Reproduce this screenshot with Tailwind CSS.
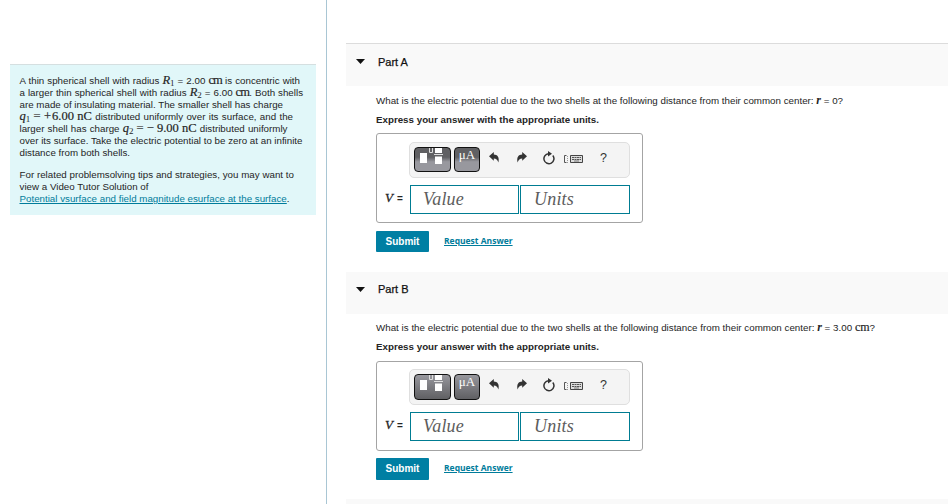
<!DOCTYPE html>
<html lang="en">
<head>
<meta charset="utf-8">
<title>Electric potential of two shells</title>
<script src="https://cdn.jsdelivr.net/npm/@tailwindcss/browser@4"></script>
</head>
<body class="bg-white text-[#252525] font-['Liberation_Sans',Arial,sans-serif] overflow-hidden">
<svg class="hidden">
  <symbol id="undo" viewBox="0 0 11 11"><path d="M0 4.300 4.800 0v2.500C8.300 2.600 10.600 4.900 9.400 10.500 8.500 7.800 7.200 6.500 4.800 6.400v2.400z" fill="#333"/></symbol>
  <symbol id="reset" viewBox="0 0 14 14"><path d="M6.500 2.700A5 5 0 1 0 10.800 4.500" fill="none" stroke="#333" stroke-width="1.500"/><path d="M6 0 10 2.800 6 5.400z" fill="#333"/></symbol>
  <symbol id="keys" viewBox="0 0 19 10"><path d="M2.500 1.500h-2v7h2" fill="none" stroke="#555"/><path d="M3.500 2v7" stroke="#999" stroke-dasharray="1 1"/><path d="M6.500 1.500h12v7h-12z" fill="#ddd" stroke="#444"/><path d="M8 3.500h9M8 5.500h9" stroke="#555" stroke-dasharray="2 .5"/><path d="M10 7h5" stroke="#777"/></symbol>
  <symbol id="templates" viewBox="0 0 35 23"><path d="M5 5h7v10H5zM20 0h7v5h-7zM20 8.500h7V16h-7z" fill="#fff"/><path d="M14.500 0v4.500h3V0M19 6.500h9" fill="none" stroke="#ddd"/></symbol>
</svg>
<div class="flex h-[504px] w-[948px]">
  <aside class="w-[327px] shrink-0 border-r border-[#a9c6d4] pt-[64px] pl-[10px]">
    <div class="h-[151px] w-[306px] border-t border-[#d5dfe0] bg-[#e1f7f9] pt-[10px] pl-[9.500px] text-[9.750px] leading-[12px] whitespace-nowrap [&_div]:h-[12px] [&_div]:[text-align-last:justify] [&_i]:font-['Liberation_Serif',serif] [&_i]:text-[12.500px] [&_i]:leading-[0px] [&_i]:[-webkit-text-stroke:.2px_#252525] [&_b]:font-['Liberation_Serif',serif] [&_b]:font-normal [&_b]:text-[12.500px] [&_b]:leading-[0px] [&_b]:[-webkit-text-stroke:.2px_#252525] [&_sub]:text-[9px] [&_sub]:leading-[0px] [&_sub]:font-['Liberation_Serif',serif] [&_sub]:bottom-[-2px]">
      <div class="w-[280.500px]">A thin spherical shell with radius <i>R</i><sub>1</sub> = 2.00 <b class="tracking-[-.8px]">cm</b> is concentric with</div>
      <div class="w-[283.500px]">a larger thin spherical shell with radius <i>R</i><sub>2</sub> = 6.00 <b class="tracking-[-.8px]">cm</b>. Both shells</div>
      <div class="w-[263.500px]">are made of insulating material. The smaller shell has charge</div>
      <div class="w-[273.500px]"><i>q</i><sub>1</sub> <b class="text-[#777]">=</b> <b>+&hairsp;6.00</b> <b>nC</b> distributed uniformly over its surface, and the</div>
      <div class="w-[268px]">larger shell has charge <i>q</i><sub>2</sub> <b class="text-[#777]">=</b> <b>−</b> <b>9.00</b> <b>nC</b> distributed uniformly</div>
      <div class="w-[283px]">over its surface. Take the electric potential to be zero at an infinite</div>
      <div class="w-[110px]">distance from both shells.</div>
      <div class="mt-[10px] w-[274.500px]">For related problemsolving tips and strategies, you may want to</div>
      <div class="w-[129px]">view a Video Tutor Solution of</div>
      <div class="w-[270px]"><a class="text-[#007c9b] underline">Potential vsurface and field magnitude esurface at the surface</a>.</div>
    </div>
  </aside>
  <main class="flex-1 pl-[19px] pt-[43px]">
    <section class="h-[229px]">
      <header class="flex h-[43px] items-center border-t border-[#dcdcdc] bg-[#f9f9f9] pl-[11px] pb-[7px]">
        <svg class="-ml-px h-[5px] w-[9px]" viewBox="0 0 8 5" preserveAspectRatio="none"><path d="M0 0h8L4 5z" fill="#111"/></svg>
        <h2 class="ml-[13px] text-[11px] leading-[14px] font-normal text-[#111] [-webkit-text-stroke:.25px_#111]">Part A</h2>
      </header>
      <div class="pl-[30px] pt-[8px] whitespace-nowrap">
        <p class="h-[14px] w-[467px] text-[9.750px] leading-[14px] [text-align-last:justify]">What is the electric potential due to the two shells at the following distance from their common center: <i class="font-['Liberation_Serif',serif] text-[12px] leading-[0px] font-bold">r</i> = 0?</p>
        <p class="mt-[5px] h-[14px] w-[223px] text-[9.750px] leading-[14px] font-bold [text-align-last:justify]">Express your answer with the appropriate units.</p>
        <div class="mt-[6px] h-[90px] w-[267px] rounded-[3px] border border-[#a4a4a4] pt-[8px] pl-[8px]">
          <div class="ml-[24px] flex h-[36px] w-[221px] items-start rounded-[5px] border border-[#dfdfdf] bg-[#f4f4f4] pl-[4px] pt-[4px]">
            <div class="h-[25px] w-[37px] rounded-[4px] border border-[#111] bg-linear-to-b from-[#606063] from-40% to-[#98989e] to-60%"><svg class="h-[23px] w-[35px]"><use href="#templates"/></svg></div>
            <div class="ml-[3px] h-[25px] w-[26px] rounded-[4px] border border-[#111] bg-linear-to-b from-[#606063] from-40% to-[#98989e] to-60% text-center font-['Liberation_Serif',serif] text-[13px] leading-[14px] text-white">μA</div>
            <svg class="mt-[5px] ml-[9px] h-[11px] w-[11px]"><use href="#undo"/></svg>
            <svg class="mt-[5px] ml-[16px] h-[11px] w-[11px] -scale-x-100"><use href="#undo"/></svg>
            <svg class="mt-[4px] ml-[15px] h-[14px] w-[14px]"><use href="#reset"/></svg>
            <svg class="mt-[7px] ml-[8px] h-[10px] w-[19px]"><use href="#keys"/></svg>
            <span class="mt-[4px] ml-[17px] text-[12.500px] leading-[14px] text-[#333]">?</span>
          </div>
          <div class="mt-[7px] flex h-[29px]">
            <div class="flex w-[25px] gap-[4px] text-[10px] leading-[26px]"><i class="font-['Liberation_Serif',serif] text-[13px] [-webkit-text-stroke:.3px_#252525]">V</i><span class="font-bold pt-px">=</span></div>
            <div class="w-[109px] border border-[#007c92] pl-[12px] font-['Liberation_Serif',serif] text-[18px] leading-[27px] text-[#5c5c5c] italic tracking-[.2px]">Value</div>
            <div class="ml-px w-[110px] border border-[#007c92] pl-[13px] font-['Liberation_Serif',serif] text-[18px] leading-[27px] text-[#5c5c5c] italic tracking-[.2px]">Units</div>
          </div>
        </div>
        <div class="mt-[8px] flex items-start">
          <button class="h-[21px] w-[53px] rounded-[1px] bg-[#007fa3] text-[10px] leading-[20px] font-bold text-white">Submit</button>
          <a class="mt-[3px] ml-[15px] w-[68px] [text-align-last:justify] font-['Open_Sans',sans-serif] text-[8.500px] leading-[14px] font-bold text-[#007c9b] underline">Request Answer</a>
        </div>
      </div>
    </section>
    <section class="h-[227px]">
      <header class="flex h-[42px] items-center bg-[#f9f9f9] pl-[11px] pb-[8px]">
        <svg class="-ml-px h-[5px] w-[9px]" viewBox="0 0 8 5" preserveAspectRatio="none"><path d="M0 0h8L4 5z" fill="#111"/></svg>
        <h2 class="ml-[13px] text-[11px] leading-[14px] font-normal text-[#111] [-webkit-text-stroke:.25px_#111]">Part B</h2>
      </header>
      <div class="pl-[30px] pt-[7px] whitespace-nowrap">
        <p class="h-[14px] w-[499px] text-[9.750px] leading-[14px] [text-align-last:justify]">What is the electric potential due to the two shells at the following distance from their common center: <i class="font-['Liberation_Serif',serif] text-[12px] leading-[0px] font-bold">r</i> = 3.00 <b class="font-['Liberation_Serif',serif] text-[12px] leading-[0px] font-normal [-webkit-text-stroke:.2px_#252525]">cm</b>?</p>
        <p class="mt-[5px] h-[14px] w-[223px] text-[9.750px] leading-[14px] font-bold [text-align-last:justify]">Express your answer with the appropriate units.</p>
        <div class="mt-[7px] h-[90px] w-[267px] rounded-[3px] border border-[#a4a4a4] pt-[7px] pl-[8px]">
          <div class="ml-[24px] flex h-[36px] w-[221px] items-start rounded-[5px] border border-[#dfdfdf] bg-[#f4f4f4] pl-[4px] pt-[4px]">
            <div class="h-[26px] w-[37px] rounded-[4px] border border-[#111] bg-linear-to-b from-[#98989e] to-[#606063]"><svg class="h-[23px] w-[35px]"><use href="#templates"/></svg></div>
            <div class="ml-[3px] h-[26px] w-[26px] rounded-[4px] border border-[#111] bg-linear-to-b from-[#98989e] to-[#606063] text-center font-['Liberation_Serif',serif] text-[13px] leading-[14px] text-white">μA</div>
            <svg class="mt-[5px] ml-[9px] h-[11px] w-[11px]"><use href="#undo"/></svg>
            <svg class="mt-[5px] ml-[16px] h-[11px] w-[11px] -scale-x-100"><use href="#undo"/></svg>
            <svg class="mt-[4px] ml-[15px] h-[14px] w-[14px]"><use href="#reset"/></svg>
            <svg class="mt-[7px] ml-[8px] h-[10px] w-[19px]"><use href="#keys"/></svg>
            <span class="mt-[4px] ml-[17px] text-[12.500px] leading-[14px] text-[#333]">?</span>
          </div>
          <div class="mt-[7px] flex h-[29px]">
            <div class="flex w-[25px] gap-[4px] text-[10px] leading-[26px]"><i class="font-['Liberation_Serif',serif] text-[13px] [-webkit-text-stroke:.3px_#252525]">V</i><span class="font-bold pt-px">=</span></div>
            <div class="w-[109px] border border-[#007c92] pl-[12px] font-['Liberation_Serif',serif] text-[18px] leading-[27px] text-[#5c5c5c] italic tracking-[.2px]">Value</div>
            <div class="ml-px w-[110px] border border-[#007c92] pl-[13px] font-['Liberation_Serif',serif] text-[18px] leading-[27px] text-[#5c5c5c] italic tracking-[.2px]">Units</div>
          </div>
        </div>
        <div class="mt-[7px] flex items-start">
          <button class="h-[22px] w-[53px] rounded-[1px] bg-[#007fa3] text-[10px] leading-[20px] font-bold text-white">Submit</button>
          <a class="mt-[3px] ml-[15px] w-[68px] [text-align-last:justify] font-['Open_Sans',sans-serif] text-[8.500px] leading-[14px] font-bold text-[#007c9b] underline">Request Answer</a>
        </div>
      </div>
    </section>
    <div class="h-[5px] bg-[#f9f9f9]"></div>
  </main>
</div>
</body>
</html>
